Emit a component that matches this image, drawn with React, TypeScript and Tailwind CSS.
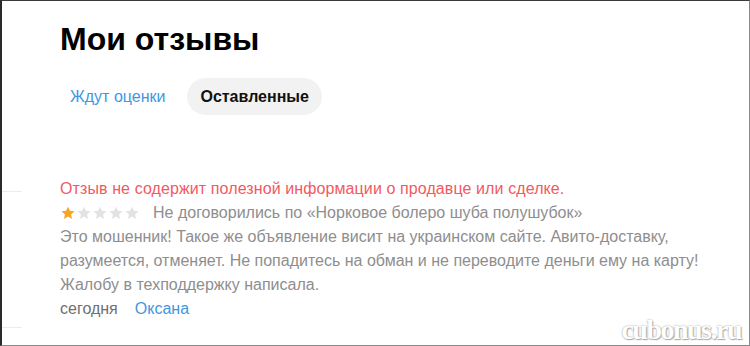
import React from 'react';

const font = { fontFamily: '"Liberation Sans", Arial, sans-serif' };

function Star({ filled }: { filled: boolean }) {
  return (
    <svg viewBox="0 0 24 24" className="w-[16px] h-[16px]">
      <path
        d="M12 2.5l2.9 6.3 6.9.7-5.2 4.6 1.5 6.8L12 17.4l-6.1 3.5 1.5-6.8-5.2-4.6 6.9-.7z"
        fill={filled ? '#f5a623' : '#e3e3e3'}
      />
    </svg>
  );
}

export default function App() {
  return (
    <div
      className="relative w-[750px] h-[346px] overflow-hidden bg-white border-l-2 border-t border-r border-b border-l-[#2a2a2a] border-t-[#3a3a3a] border-r-[#8a8a8a] border-b-[#8a8a8a] flex"
      style={font}
    >
      {/* левая колонка с обрезками разделителей */}
      <div className="w-[20px] shrink-0">
        <div className="mt-[190px] h-px bg-[#ececec]" />
        <div className="mt-[135px] h-px bg-[#ececec]" />
      </div>

      <div className="pl-[38px] flex flex-col">
        <h1 className="mt-[18px] text-[32px] leading-[40px] font-bold text-black">Мои отзывы</h1>

        <div className="mt-[19px] flex items-center gap-[12px]">
          <button className="h-[37px] px-[10px] rounded-full text-[16px] text-[#3d98e3]">Ждут оценки</button>
          <button className="h-[37px] px-[13px] rounded-full bg-[#f2f2f2] text-[16px] font-bold text-[#111]">
            Оставленные
          </button>
        </div>

        <div className="mt-[62px] text-[16px] leading-[24px]">
          <p className="text-[#f25a5f] tracking-[0.1px]">Отзыв не содержит полезной информации о продавце или сделке.</p>
          <div className="flex items-center">
            <div className="flex">
              <Star filled />
              <Star filled={false} />
              <Star filled={false} />
              <Star filled={false} />
              <Star filled={false} />
            </div>
            <span className="ml-[13px] text-[#8e8e8e]">Не договорились по «Норковое болеро шуба полушубок»</span>
          </div>
          <p className="text-[#8e8e8e]">
            Это мошенник! Такое же объявление висит на украинском сайте. Авито-доставку,
            <br />
            разумеется, отменяет. Не попадитесь на обман и не переводите деньги ему на карту!
            <br />
            Жалобу в техподдержку написала.
          </p>
          <div className="flex gap-[17px]">
            <span className="text-[#6f6f6f]">сегодня</span>
            <span className="text-[#3d98e3]">Оксана</span>
          </div>
        </div>
      </div>

      {/* водяной знак */}
      <span
        className="absolute right-[8px] bottom-[1px] text-[28px] font-bold text-white leading-none tracking-[-1.5px]"
        style={{ fontFamily: '"Liberation Serif", serif', textShadow: '0 0 2px #9a9a9a, 1px 1px 1px #b0b0b0' }}
      >
        cubonus.ru
      </span>
    </div>
  );
}
